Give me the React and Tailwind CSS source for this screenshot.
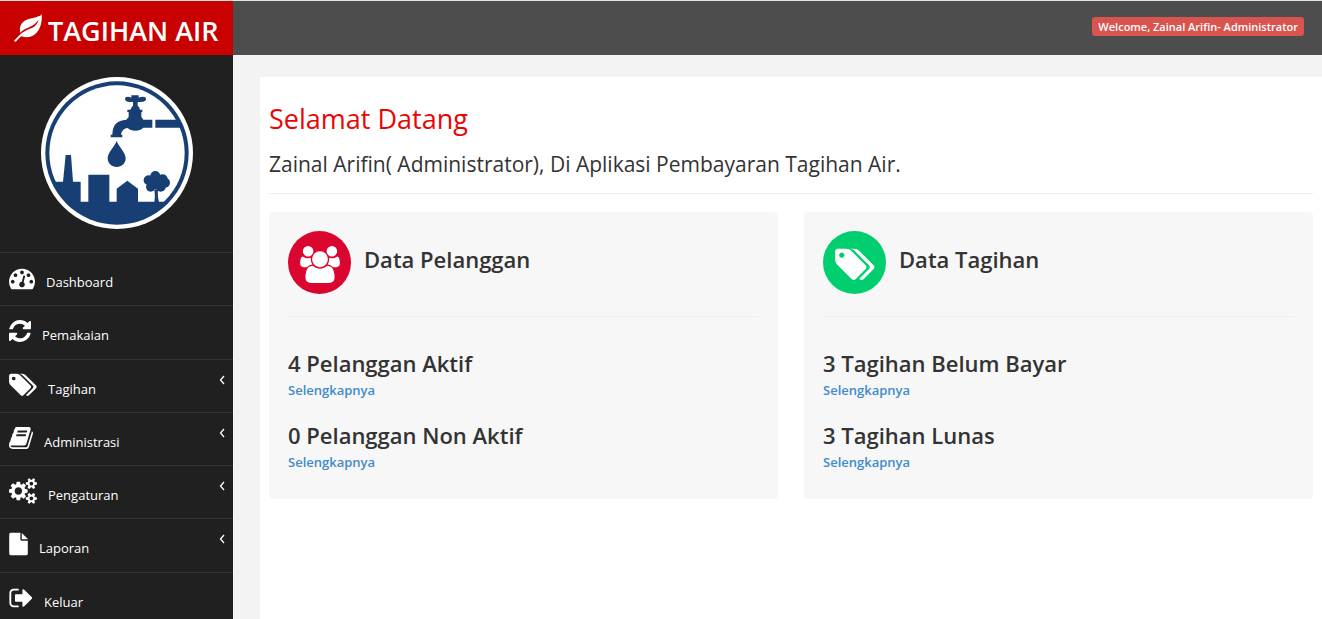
import React from 'react';

// Glyph outlines on a 1792 unit em, width differs per glyph
const GLYPHS = {
    dashboard: {
        box: '0 0 1792 1792',
        d: 'M384 1152q0-53-37.5-90.5t-90.5-37.5-90.5 37.5-37.5 90.5 37.5 90.5 90.5 37.5 90.5-37.5 37.5-90.5zm192-448q0-53-37.5-90.5t-90.5-37.5-90.5 37.5-37.5 90.5 37.5 90.5 90.5 37.5 90.5-37.5 37.5-90.5zm428 481l101-382q6-26-7.5-48.5t-38.5-29.5-48 6.5-30 39.5l-101 382q-60 5-107 43.5t-63 98.5q-20 77 20 146t117 89 146-20 89-117q16-60-6-117t-72-91zm660-33q0-53-37.5-90.5t-90.5-37.5-90.5 37.5-37.5 90.5 37.5 90.5 90.5 37.5 90.5-37.5 37.5-90.5zm-640-640q0-53-37.5-90.5t-90.5-37.5-90.5 37.5-37.5 90.5 37.5 90.5 90.5 37.5 90.5-37.5 37.5-90.5zm448 192q0-53-37.5-90.5t-90.5-37.5-90.5 37.5-37.5 90.5 37.5 90.5 90.5 37.5 90.5-37.5 37.5-90.5zm320 448q0 261-141 483-19 29-54 29h-1402q-35 0-54-29-141-221-141-483 0-182 71-348t191-286 286-191 348-71 348 71 286 191 191 286 71 348z',
    },
    refresh: {
        box: '128 0 1536 1792',
        d: 'M1639 1056q0 5-1 7-64 268-268 434.5t-478 166.5q-146 0-282.5-55t-243.5-157l-129 129q-19 19-45 19t-45-19-19-45v-448q0-26 19-45t45-19h448q26 0 45 19t19 45-19 45l-137 137q71 66 161 102t187 36q134 0 250-65t186-179q11-17 53-117 8-23 30-23h192q13 0 22.5 9.5t9.5 22.5zm25-800v448q0 26-19 45t-45 19h-448q-26 0-45-19t-19-45 19-45l138-138q-148-137-349-137-134 0-250 65t-186 179q-11 17-53 117-8 23-30 23h-199q-13 0-22.5-9.5t-9.5-22.5v-7q65-268 270-434.5t480-166.5q146 0 284 55.5t245 156.5l130-129q19-19 45-19t45 19 19 45z',
    },
    tags: {
        box: '0 0 1920 1792',
        d: 'M448 448q0-53-37.5-90.5t-90.5-37.5-90.5 37.5-37.5 90.5 37.5 90.5 90.5 37.5 90.5-37.5 37.5-90.5zm1067 576q0 53-37 90l-491 492q-39 37-91 37-53 0-90-37l-715-716q-38-37-64.5-101t-26.5-117v-416q0-52 38-90t90-38h416q53 0 117 26.5t102 64.5l715 714q37 39 37 91zm384 0q0 53-37 90l-491 492q-39 37-91 37-36 0-59-14t-53-45l470-470q37-37 37-90 0-52-37-91l-715-714q-38-38-102-64.5t-117-26.5h224q53 0 117 26.5t102 64.5l715 714q37 39 37 91z',
    },
    book: {
        box: '64 0 1664 1792',
        d: 'M1703 478q40 57 18 129l-275 906q-19 64-76.5 107.5t-122.5 43.5h-923q-77 0-148.5-53.5t-99.5-131.5q-24-67-2-127 0-4 3-27t4-37q1-8-3-21.5t-3-19.5q2-11 8-21t16.5-23.5 16.5-23.5q23-38 45-91.5t30-91.5q3-10 .5-30t-.5-28q3-11 17-28t17-23q21-36 42-92t25-90q1-9-2.5-32t.5-28q4-13 22-30.5t22-22.5q19-26 42.5-84.5t27.5-96.5q1-8-3-25.5t-2-26.5q2-8 9-18t18-23 17-21q8-12 16.5-30.5t15-35 16-36 19.5-32 26.5-23.5 36-11.5 47.5 5.5l-1 3q38-9 51-9h761q74 0 114 56t18 130l-274 906q-36 119-71.5 153.5t-128.5 34.5h-869q-27 0-38 15-11 16-1 43 24 70 144 70h923q29 0 56-15.5t35-41.5l300-987q7-22 5-57 38 15 59 43zm-1064 2q-4 13 2 22.5t20 9.5h608q13 0 25.5-9.5t16.5-22.5l21-64q4-13-2-22.5t-20-9.5h-608q-13 0-25.5 9.5t-16.5 22.5zm-83 256q-4 13 2 22.5t20 9.5h608q13 0 25.5-9.5t16.5-22.5l21-64q4-13-2-22.5t-20-9.5h-608q-13 0-25.5 9.5t-16.5 22.5z',
    },
    cogs: {
        box: '0 0 1920 1792',
        d: 'M896 896q0-106-75-181t-181-75-181 75-75 181 75 181 181 75 181-75 75-181zm768 512q0-52-38-90t-90-38-90 38-38 90q0 53 37.5 90.5t90.5 37.5 90.5-37.5 37.5-90.5zm0-1024q0-52-38-90t-90-38-90 38-38 90q0 53 37.5 90.5t90.5 37.5 90.5-37.5 37.5-90.5zm-384 421v185q0 10-7 19.5t-16 10.5l-155 24q-11 35-32 76 34 48 90 115 7 11 7 20 0 12-7 19-23 30-82.5 89.5t-78.5 59.5q-11 0-21-7l-115-90q-37 19-77 31-11 108-23 155-7 24-30 24h-186q-11 0-20-7.5t-10-17.5l-23-153q-34-10-75-31l-118 89q-7 7-20 7-11 0-21-8-144-133-144-160 0-9 7-19 10-14 41-53t47-61q-23-44-35-82l-152-24q-10-1-17-9.5t-7-19.5v-185q0-10 7-19.5t16-10.5l155-24q11-35 32-76-34-48-90-115-7-11-7-20 0-12 7-20 22-30 82-89t79-59q11 0 21 7l115 90q34-18 77-32 11-108 23-154 7-24 30-24h186q11 0 20 7.5t10 17.5l23 153q34 10 75 31l118-89q8-7 20-7 11 0 21 8 144 133 144 160 0 8-7 19-12 16-42 54t-45 60q23 48 34 82l152 23q10 2 17 10.5t7 19.5zm640 533v140q0 16-149 31-12 27-30 52 51 113 51 138 0 4-4 7-122 71-124 71-8 0-46-47t-52-68q-20 2-30 2t-30-2q-14 21-52 68t-46 47q-2 0-124-71-4-3-4-7 0-25 51-138-18-25-30-52-149-15-149-31v-140q0-16 149-31 13-29 30-52-51-113-51-138 0-4 4-7 4-2 35-20t59-34 30-16q8 0 46 46.5t52 67.5q20-2 30-2t30 2q51-71 92-112l6-2q4 0 124 70 4 3 4 7 0 25-51 138 17 23 30 52 149 15 149 31zm0-1024v140q0 16-149 31-12 27-30 52 51 113 51 138 0 4-4 7-122 71-124 71-8 0-46-47t-52-68q-20 2-30 2t-30-2q-14 21-52 68t-46 47q-2 0-124-71-4-3-4-7 0-25 51-138-18-25-30-52-149-15-149-31v-140q0-16 149-31 13-29 30-52-51-113-51-138 0-4 4-7 4-2 35-20t59-34 30-16q8 0 46 46.5t52 67.5q20-2 30-2t30 2q51-71 92-112l6-2q4 0 124 70 4 3 4 7 0 25-51 138 17 23 30 52 149 15 149 31z',
    },
    file: {
        box: '0 0 1280 1792',
        d: 'M864 576v-440q22 14 36 28l352 348q14 14 28 64zM768 128v448q0 40 28 68t68 28h416v896q0 40-28 68t-68 28h-1088q-40 0-68-28t-28-68v-1344q0-40 28-68t68-28z',
    },
    signOut: {
        box: '64 0 1600 1792',
        d: 'M704 1440q0 4 1 20t.5 26.5-3 23.5-10 19.5-20.5 6.5h-320q-119 0-203.5-84.5t-84.5-203.5v-704q0-119 84.5-203.5t203.5-84.5h320q13 0 22.5 9.5t9.5 22.5q0 4 1 20t.5 26.5-3 23.5-10 19.5-20.5 6.5h-320q-66 0-113 47t-47 113v704q0 66 47 113t113 47h312l11.5 1 11.5 3 8 5.5 7 9 2 13.5zm928-544q0 26-19 45l-544 544q-19 19-45 19t-45-19-19-45v-288h-448q-26 0-45-19t-19-45v-384q0-26 19-45t45-19h448v-288q0-26 19-45t45-19 45 19l544 544q19 19 19 45z',
    },
    users: {
        box: '0 0 1920 1792',
        d: 'M593 896q-162 5-265 128h-134q-82 0-138-40.5t-56-118.5q0-353 124-353 6 0 43.5 21t97.5 42.5 119 21.5q67 0 133-23-5 37-5 66 0 139 81 256zm1071 637q0 120-73 189.5t-194 69.5h-874q-121 0-194-69.5t-73-189.5q0-53 3.5-103.5t14-109 26.5-108.5 43-97.5 62-81 85.5-53.5 111.5-20q10 0 43 21.5t73 48 107 48 135 21.5 135-21.5 107-48 73-48 43-21.5q61 0 111.5 20t85.5 53.5 62 81 43 97.5 26.5 108.5 14 109 3.5 103.5zm-1024-1277q0 106-75 181t-181 75-181-75-75-181 75-181 181-75 181 75 75 181zm704 384q0 159-112.5 271.5t-271.5 112.5-271.5-112.5-112.5-271.5 112.5-271.5 271.5-112.5 271.5 112.5 112.5 271.5zm576 225q0 78-56 118.5t-138 40.5h-134q-103-123-265-128 81-117 81-256 0-29-5-66 66 23 133 23 59 0 119-21.5t97.5-42.5 43.5-21q124 0 124 353zm-128-609q0 106-75 181t-181 75-181-75-75-181 75-181 181-75 181 75 75 181z',
    },
};

const Glyph = ({ name, className }) => (
    <svg viewBox={GLYPHS[name].box} className={className} fill="currentColor" aria-hidden="true">
        <path d={GLYPHS[name].d} />
    </svg>
);

const Leaf = () => (
    <svg viewBox="0 0 84 84" className="w-7 h-7 shrink-0" fill="currentColor" aria-hidden="true">
        <path d="M83 0C80 8 62 10 44 15C24 21 14 36 19 56C34 42 48 40 58 33C66 28 70 22 74 18C71 30 63 38 52 43C38 48 26 54 16 64L0 80C3 85 6 83 8 80L21 67C34 72 56 70 68 56C81 40 85 20 83 0Z" />
    </svg>
);

const WaterLogo = () => (
    <svg viewBox="32 21 456 456" className="w-[152px] h-[152px]" role="img" aria-label="Logo">
        <defs>
            <clipPath id="disc">
                <circle cx="260" cy="249" r="210" />
            </clipPath>
        </defs>
        <circle cx="260" cy="249" r="228" fill="#fff" />
        <circle cx="260" cy="249" r="215" fill="#173f73" />
        <circle cx="260" cy="249" r="203" fill="#fff" />
        <g fill="#173f73" clipPath="url(#disc)">
            {/* skyline */}
            <path d="M40 335H98L106 255H122L128 335H151V395H174V314H237V395H259V356L291 332L323 356V395H372Q375 380 372 360H383Q381 382 386 395H480V480H40Z" />
            <circle cx="375" cy="318" r="15" />
            <circle cx="355" cy="331" r="15" />
            <circle cx="397" cy="328" r="15" />
            <circle cx="361" cy="351" r="14" />
            <circle cx="391" cy="350" r="15" />
            <circle cx="404" cy="338" r="15" />
            <circle cx="377" cy="339" r="20" />
            {/* drop */}
            <path d="M259 212C255 228 232 246 232 265C232 281 244 291 259 291C274 291 286 281 286 265C286 246 263 228 259 212Z" />
            {/* tap */}
            <path d="M375 149H460V173H375Z" />
            <path d="M366 149V173H339Q330 182 315 182Q300 182 292 174Q276 174 272 194H276V202H241V194H246Q246 151 288 149L295 141V126H291V119H300Q304 110 308 107V96Q296 96 292 95Q284 93 284 87Q284 80 293 80Q299 80 303 83V76H325V83Q330 80 337 80Q347 80 347 87Q347 94 338 95Q330 96 322 96V107Q328 112 329 119H336V126H333V141L339 149Z" />
        </g>
    </svg>
);

const MENU = [
    { icon: 'dashboard', label: 'Dashboard', size: 'w-[26px]' },
    { icon: 'refresh', label: 'Pemakaian', size: 'w-[22px]' },
    { icon: 'tags', label: 'Tagihan', size: 'w-7', sub: true },
    { icon: 'book', label: 'Administrasi', size: 'w-6', sub: true },
    { icon: 'cogs', label: 'Pengaturan', size: 'w-7', sub: true },
    { icon: 'file', label: 'Laporan', size: 'w-[19px]', sub: true },
    { icon: 'signOut', label: 'Keluar', size: 'w-6' },
];

const CARDS = [
    {
        icon: 'users',
        title: 'Data Pelanggan',
        color: 'bg-[#db0630]',
        stats: ['4 Pelanggan Aktif', '0 Pelanggan Non Aktif'],
    },
    {
        icon: 'tags',
        title: 'Data Tagihan',
        color: 'bg-[#00ce6f]',
        stats: ['3 Tagihan Belum Bayar', '3 Tagihan Lunas'],
    },
];

const MenuItem = ({ item }) => (
    <li className="border-t border-[#323232]">
        <a href="#" className="flex items-end pt-3 pl-[9px] pr-2 gap-[11px] text-white">
            <Glyph name={item.icon} className={`${item.size} h-[26px] shrink-0`} />
            <span className="flex-1 text-[13px] leading-[18px]">{item.label}</span>
            {item.sub && (
                <svg viewBox="0 0 6 10" className="w-1.5 h-[10px] self-start mt-[3px]" fill="none" stroke="currentColor" strokeWidth="1.3" aria-hidden="true">
                    <path d="M5 1L1.5 5L5 9" />
                </svg>
            )}
        </a>
    </li>
);

const Card = ({ card }) => (
    <section className="bg-[#f7f7f7] rounded-sm px-[19px] pt-[19px] pb-7">
        <div className="flex items-center gap-[13px]">
            <span className={`${card.color} w-[63px] h-[63px] pt-1 rounded-full flex items-center justify-center text-white shrink-0`}>
                <Glyph name={card.icon} className="w-10 h-[37px]" />
            </span>
            <h3 className="text-[22px] leading-6 font-semibold pb-[7px]">{card.title}</h3>
        </div>
        <hr className="mt-[22px] mb-[33px] border-[#eeeeee]" />
        <ul className="space-y-[23px]">
            {card.stats.map((stat) => (
                <li key={stat}>
                    <p className="text-[22px] leading-[26px] font-semibold">{stat}</p>
                    <a href="#" className="block mt-[5px] text-[13px] leading-[18px] font-semibold text-[#428bca]">Selengkapnya</a>
                </li>
            ))}
        </ul>
    </section>
);

const App = () => {
    return (
        <div className="min-h-screen flex flex-col bg-[#202020] text-[#333333] font-['Open_Sans',sans-serif]">
            <header className="flex h-[55px] border-t border-[#dfe3e1] bg-[#4d4d4d]">
                <a href="#" className="w-[233px] shrink-0 bg-[#c90000] text-white flex items-center pl-[14px] gap-1.5">
                    <Leaf />
                    <span className="text-[27px] leading-8 font-semibold whitespace-nowrap pt-1.5">TAGIHAN AIR</span>
                </a>
                <div className="flex-1 flex justify-end items-start pt-4 pr-[18px]">
                    <span className="bg-[#d9534f] text-white rounded-[3px] px-1.5 text-[11px] leading-[19px] font-semibold">
                        Welcome, Zainal Arifin- Administrator
                    </span>
                </div>
            </header>

            <div className="flex flex-1">
                <aside className="w-[233px] shrink-0">
                    <div className="flex justify-center pt-[22px] pb-[23px]">
                        <WaterLogo />
                    </div>
                    <nav>
                        <ul className="grid auto-rows-fr min-h-[373px]">
                            {MENU.map((item) => (
                                <MenuItem key={item.label} item={item} />
                            ))}
                        </ul>
                    </nav>
                </aside>

                <main className="flex-1 flex bg-[#f3f3f3] pl-[27px] pt-[22px]">
                    <div className="flex-1 bg-white px-[9px] pt-6">
                        <h1 className="text-[27px] leading-9 text-[#ea0505]">Selamat Datang</h1>
                        <h2 className="mt-3 text-[21px] leading-[30px]">
                            Zainal Arifin( Administrator), Di Aplikasi Pembayaran Tagihan Air.
                        </h2>
                        <hr className="mt-[14px] mb-[18px] border-[#eeeeee]" />
                        <div className="grid grid-cols-2 gap-[26px]">
                            {CARDS.map((card) => (
                                <Card key={card.title} card={card} />
                            ))}
                        </div>
                    </div>
                </main>
            </div>
        </div>
    );
};

export default App;
